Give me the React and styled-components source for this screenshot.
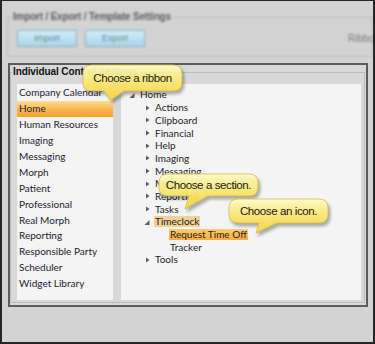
import React from "react";
import styled, { createGlobalStyle } from "styled-components";

const GlobalStyle = createGlobalStyle`
  html, body {
    margin: 0;
    padding: 0;
    background: #d3d3d3;
  }
  body {
    font-family: "Lato", "Liberation Sans", sans-serif;
  }
`;

const Screen = styled.div`
  position: relative;
  box-sizing: border-box;
  width: 375px;
  height: 344px;
  overflow: hidden;
  background: #d3d3d3;
  border: 2px solid #262626;
  border-top-width: 1px;
`;

const TopGroup = styled.fieldset`
  box-sizing: border-box;
  width: 366px;
  height: 46px;
  margin: 10px 0 0 5px;
  padding: 0;
  min-inline-size: 0;
  border: 1px solid #bdbdbd;
  filter: blur(1px);
`;

const TopLegend = styled.legend`
  margin-left: 4px;
  padding: 0 1px;
  font: bold 10px/12px "Liberation Sans", sans-serif;
  letter-spacing: -0.2px;
  color: #5e5e5e;
`;

const ButtonRow = styled.div`
  display: flex;
  align-items: center;
  gap: 8px;
  margin-top: 7px;
  padding-left: 9px;
  white-space: nowrap;
`;

const BlueButton = styled.div`
  flex: none;
  box-sizing: border-box;
  width: 60px;
  height: 17px;
  border: 1px solid #8db4c6;
  background: linear-gradient(#d2ecf7, #a8d5e9);
  color: #6a8794;
  font: 9px/15px "Liberation Sans", sans-serif;
  text-align: center;
`;

const SideLabel = styled.span`
  flex: none;
  margin-left: 195px;
  font: 10px "Liberation Sans", sans-serif;
  color: #7a7a7a;
`;

const Frame = styled.div`
  box-sizing: border-box;
  width: 360px;
  height: 244px;
  margin: 6px 0 0 6px;
  border: 2px solid #5b5b5b;
  background: #d8d8d8;
`;

const GroupBox = styled.fieldset`
  box-sizing: border-box;
  height: 238px;
  margin: 0 1px 2px 0;
  padding: 0 3px 0 6px;
  min-inline-size: 0;
  border: 1px solid #bcbcbc;
`;

const GroupLegend = styled.legend`
  margin-left: -5px;
  padding: 0 1px;
  font: bold 10px/14px "Liberation Sans", sans-serif;
  letter-spacing: -0.1px;
  color: #111;
`;

const Body = styled.div`
  display: flex;
  gap: 8px;
  height: 216px;
  margin-top: 5px;
`;

const RibbonList = styled.ul`
  list-style: none;
  box-sizing: border-box;
  width: 96px;
  margin: 0;
  padding: 1.4px 0 0;
  background: #f4f4f4;
`;

const RibbonItem = styled.li`
  height: 15.9px;
  padding-left: 2px;
  font-size: 10px;
  line-height: 15.9px;
  color: #1f2233;
  white-space: nowrap;
  background: ${(p) =>
    p.$selected
      ? "linear-gradient(#fddc94, #f9b64c 55%, #f6a02c)"
      : "transparent"};
`;

const Tree = styled.div`
  flex: 1;
  padding-top: 4.6px;
  background: #f4f4f4;
`;

const TreeRow = styled.div`
  display: flex;
  align-items: center;
  height: 12.7px;
  padding-left: ${(p) => 5 + p.$level * 15}px;
  font-size: 10px;
  color: #1e1e1e;
  white-space: nowrap;
`;

const Expander = styled.svg`
  flex: none;
  width: 14px;
  height: 12px;
`;

const NodeLabel = styled.span`
  padding: 0 1px;
  margin-left: -1px;
  line-height: 11px;
  background: ${(p) =>
    p.$tone === "strong"
      ? "linear-gradient(#fccb72, #f8ac40)"
      : p.$tone === "soft"
      ? "#f1d196"
      : "transparent"};
`;

const CalloutBox = styled.div`
  position: absolute;
  width: ${(p) => p.$w}px;
  height: ${(p) => p.$h}px;
  display: flex;
  align-items: center;
  justify-content: center;
`;

const CalloutShape = styled.svg`
  position: absolute;
  left: 0;
  top: 0;
  overflow: visible;
  filter: drop-shadow(2px 3px 1.5px rgba(0, 0, 0, 0.32));
`;

const CalloutText = styled.span`
  position: relative;
  font: 11.5px "Liberation Sans", sans-serif;
  letter-spacing: -0.4px;
  color: #1a1a1a;
  white-space: nowrap;
`;

const ribbons = [
  "Company Calendar",
  "Home",
  "Human Resources",
  "Imaging",
  "Messaging",
  "Morph",
  "Patient",
  "Professional",
  "Real Morph",
  "Reporting",
  "Responsible Party",
  "Scheduler",
  "Widget Library",
];

const nodes = [
  { label: "Home", level: 0, state: "open" },
  { label: "Actions", level: 1, state: "closed" },
  { label: "Clipboard", level: 1, state: "closed" },
  { label: "Financial", level: 1, state: "closed" },
  { label: "Help", level: 1, state: "closed" },
  { label: "Imaging", level: 1, state: "closed" },
  { label: "Messaging", level: 1, state: "closed" },
  { label: "Morph", level: 1, state: "closed" },
  { label: "Reporting", level: 1, state: "closed" },
  { label: "Tasks", level: 1, state: "closed" },
  { label: "Timeclock", level: 1, state: "open", tone: "soft" },
  { label: "Request Time Off", level: 2, tone: "strong" },
  { label: "Tracker", level: 2 },
  { label: "Tools", level: 1, state: "closed" },
];

const callouts = [
  { text: "Choose a ribbon", x: 83, y: 65, w: 99, h: 26, base: [21, 41], tip: [28, 35] },
  { text: "Choose a section.", x: 159, y: 174, w: 99, h: 22, base: [30, 49], tip: [26, 35] },
  { text: "Choose an icon.", x: 229, y: 199, w: 99, h: 24, base: [30, 48], tip: [27, 34] },
];

const Arrow = ({ state }) => (
  <Expander viewBox="0 0 14 12">
    {state === "closed" && <polygon points="5,3.5 8.5,6 5,8.5" fill="#5e5e5e" />}
    {state === "open" && <polygon points="8.5,4 8.5,9 3.5,9" fill="#5e5e5e" />}
  </Expander>
);

const bubblePath = (w, h, [b1, b2], [tx, ty]) => {
  const r = 9;
  return `M${r},0 H${w - r} Q${w},0 ${w},${r} V${h - r} Q${w},${h} ${w - r},${h} H${b2} L${tx},${ty} L${b1},${h} H${r} Q0,${h} 0,${h - r} V${r} Q0,0 ${r},0 Z`;
};

const Callout = ({ text, x, y, w, h, base, tip, id }) => (
  <CalloutBox $w={w} $h={h} style={{ left: x - 2, top: y - 1 }}>
    <CalloutShape width={w} height={h}>
      <defs>
        <linearGradient id={id} x1="0" y1="0" x2="0" y2="1">
          <stop offset="0" stopColor="#fffcc9" />
          <stop offset="0.4" stopColor="#fdec7e" />
          <stop offset="1" stopColor="#f7d540" />
        </linearGradient>
      </defs>
      <path
        d={bubblePath(w, h, base, tip)}
        fill={`url(#${id})`}
        fillOpacity="0.94"
        stroke="#d9b944"
        strokeWidth="0.8"
      />
    </CalloutShape>
    <CalloutText>{text}</CalloutText>
  </CalloutBox>
);

export default function App() {
  return (
    <>
      <GlobalStyle />
      <Screen>
        <TopGroup>
          <TopLegend>Import / Export / Template Settings</TopLegend>
          <ButtonRow>
            <BlueButton>Import</BlueButton>
            <BlueButton>Export</BlueButton>
            <SideLabel>Ribbon</SideLabel>
          </ButtonRow>
        </TopGroup>

        <Frame>
          <GroupBox>
            <GroupLegend>Individual Control Settings</GroupLegend>
            <Body>
              <RibbonList>
                {ribbons.map((r) => (
                  <RibbonItem key={r} $selected={r === "Home"}>
                    {r}
                  </RibbonItem>
                ))}
              </RibbonList>
              <Tree>
                {nodes.map((n) => (
                  <TreeRow key={n.label + n.level} $level={n.level}>
                    <Arrow state={n.state} />
                    <NodeLabel $tone={n.tone}>{n.label}</NodeLabel>
                  </TreeRow>
                ))}
              </Tree>
            </Body>
          </GroupBox>
        </Frame>

        {callouts.map((c, i) => (
          <Callout key={c.text} id={`callout-fill-${i}`} {...c} />
        ))}
      </Screen>
    </>
  );
}
